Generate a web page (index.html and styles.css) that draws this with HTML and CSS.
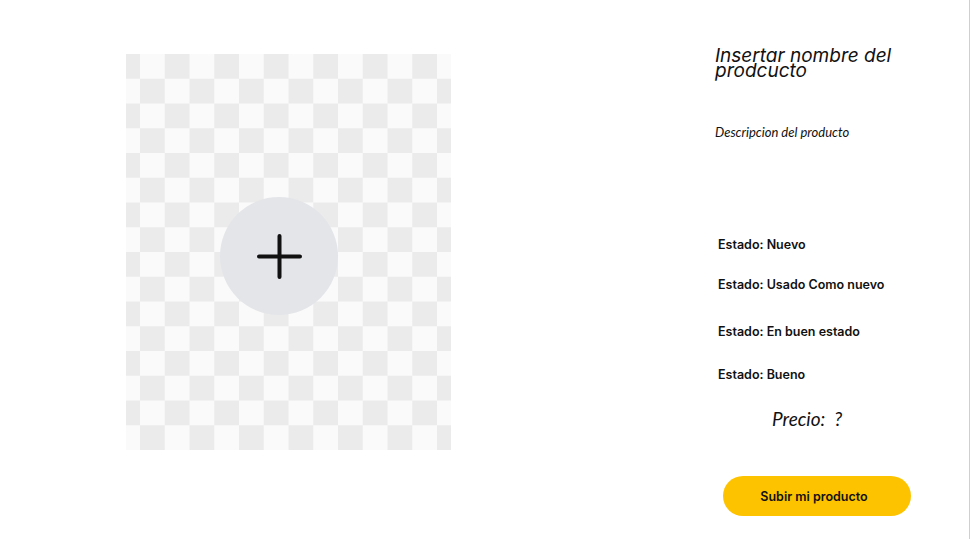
FILE: index.html
```html
<!DOCTYPE html>
<html lang="es">
<head>
<meta charset="utf-8">
<title>Subir producto</title>
<link rel="stylesheet" href="styles.css">
</head>
<body>
<main class="page">
  <div class="photo">
    <button class="add-photo" type="button" aria-label="Agregar foto">
      <svg width="45" height="45" viewBox="0 0 45 45" fill="none" stroke="#111" stroke-width="4" stroke-linecap="round"><path d="M22.5 2V43M2 22.5H43"/></svg>
    </button>
  </div>
  <section class="details">
    <h1 class="title">Insertar nombre del prodcucto</h1>
    <p class="desc">Descripcion del producto</p>
    <ul class="states">
      <li class="state">Estado: Nuevo</li>
      <li class="state">Estado: Usado Como nuevo</li>
      <li class="state">Estado: En buen estado</li>
      <li class="state">Estado: Bueno</li>
    </ul>
    <p class="price">Precio:&nbsp; ?</p>
    <button class="submit" type="button">Subir mi producto</button>
  </section>
</main>
</body>
</html>
```
FILE: styles.css
```css
html, body {
  margin: 0;
  padding: 0;
  height: 100%;
}
body {
  background: #fff;
  color: #111;
  font-family: Inter, "Liberation Sans", sans-serif;
  border-right: 1px solid #cfcfcf;
  box-sizing: border-box;
  overflow: hidden;
}
.page {
  display: flex;
  align-items: flex-start;
}
.photo {
  position: relative;
  flex: none;
  width: 325px;
  height: 396px;
  margin: 54px 0 0 126px;
  background-color: #fafafa;
  background-image: conic-gradient(#ebebeb 0 25%, #fafafa 0 50%, #ebebeb 0 75%, #fafafa 0);
  background-size: 49.5px 49.5px;
  background-position: 14px 0;
}
.add-photo {
  position: absolute;
  left: 94px;
  top: 143px;
  width: 118px;
  height: 118px;
  border: 0;
  padding: 0;
  border-radius: 50%;
  background: #e4e5e9;
  display: flex;
  align-items: center;
  justify-content: center;
  cursor: pointer;
}
.details {
  flex: none;
  width: 250px;
  margin: 48px 0 0 264px;
  display: flex;
  flex-direction: column;
  align-items: flex-start;
}
.title {
  margin: 0;
  font-size: 19px;
  line-height: 15px;
  font-weight: 400;
  font-style: italic;
  width: 215px;
}
.desc {
  margin: 47px 0 0;
  font-family: Lato, "Noto Sans", sans-serif;
  font-size: 13px;
  line-height: 15px;
  font-style: italic;
}
.states {
  list-style: none;
  margin: 97px 0 0 3px;
  padding: 0;
}
.state {
  font-size: 12.5px;
  line-height: 15px;
  font-weight: 600;
}
.state:nth-child(2) { margin-top: 25px; }
.state:nth-child(3) { margin-top: 32px; }
.state:nth-child(4) { margin-top: 28px; }
.price {
  margin: 26px 0 0 57px;
  font-family: Lato, "Noto Sans", sans-serif;
  font-size: 19px;
  line-height: 22px;
  font-style: italic;
  font-weight: 400;
}
.submit {
  margin: 46px 0 0 8px;
  width: 188px;
  height: 40px;
  padding: 0 6px 0 0;
  border: 0;
  border-radius: 20px;
  background: #fec300;
  color: #111;
  font-family: Inter, "Liberation Sans", sans-serif;
  font-size: 12.5px;
  font-weight: 600;
  cursor: pointer;
}
```
